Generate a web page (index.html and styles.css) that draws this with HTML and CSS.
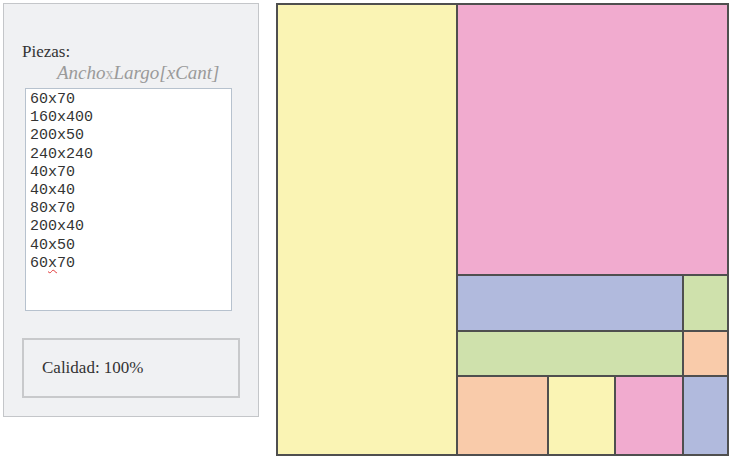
FILE: index.html
```html
<!DOCTYPE html>
<html lang="es">
<head>
<meta charset="utf-8">
<title>Piezas</title>
<link rel="stylesheet" href="styles.css">
</head>
<body>
<div class="page">
  <aside class="panel">
    <div class="label">Piezas:</div>
    <div class="hint">Ancho<span class="hx">x</span>Largo[xCant]</div>
    <div class="pieces">
      <div>60x70</div>
      <div>160x400</div>
      <div>200x50</div>
      <div>240x240</div>
      <div>40x70</div>
      <div>40x40</div>
      <div>80x70</div>
      <div>200x40</div>
      <div>40x50</div>
      <div>60<span class="spell">x</span>70</div>
    </div>
    <div class="quality">Calidad: 100%</div>
  </aside>
  <main class="bin">
    <div class="cell yellow big-y"></div>
    <div class="cell pink big-p"></div>
    <div class="cell blue wide-b"></div>
    <div class="cell green c5r2"></div>
    <div class="cell green wide-g"></div>
    <div class="cell orange c5r3"></div>
    <div class="cell orange c2r4"></div>
    <div class="cell yellow c3r4"></div>
    <div class="cell pink c4r4"></div>
    <div class="cell blue c5r4"></div>
  </main>
</div>
</body>
</html>
```
FILE: styles.css
```css
html, body {
  margin: 0;
  padding: 0;
  background: #ffffff;
}

.page {
  display: flex;
  align-items: flex-start;
  gap: 17px;
  padding: 3px 0 0 3px;
}

.panel {
  box-sizing: border-box;
  width: 256px;
  height: 414px;
  background: #f0f1f3;
  border: 1px solid #c4c6c9;
  padding: 38px 18px 0 18px;
  font-family: "Liberation Serif", "Times New Roman", serif;
  color: #333;
}

.label {
  font-size: 17px;
  line-height: 20px;
  height: 20px;
}

.hint {
  font-size: 19px;
  line-height: 20px;
  height: 20px;
  font-style: italic;
  color: #9a9a9a;
  padding-left: 35px;
  margin-top: 1px;
  white-space: nowrap;
}

.hint .hx {
  font-style: normal;
  font-size: 16px;
  color: #b0b0b0;
}

.pieces {
  box-sizing: border-box;
  margin: 5px 8px 0 3px;
  height: 223px;
  background: #ffffff;
  border: 1px solid #b7c2ce;
  padding: 2px 4px;
  font-family: "Liberation Mono", "Courier New", monospace;
  font-size: 15px;
  line-height: 18.2px;
  color: #333333;
}

.spell {
  text-decoration: underline wavy #e23a3a;
  text-decoration-thickness: 1px;
  text-underline-offset: 2px;
}

.quality {
  box-sizing: border-box;
  margin-top: 27px;
  height: 60px;
  border: 2px solid #c8c9cb;
  background: #f0f1f3;
  padding: 0 0 0 18px;
  display: flex;
  align-items: center;
  font-size: 17px;
  color: #333;
}

.bin {
  box-sizing: border-box;
  width: 453px;
  height: 453px;
  display: grid;
  grid-template-columns: 160fr 80fr 60fr 60fr 40fr;
  grid-template-rows: 240fr 50fr 40fr 70fr;
  border: 1px solid #4f4f4f;
}

.cell {
  border: 1px solid #4f4f4f;
}

.yellow { background: #faf4b4; }
.pink { background: #f1abcf; }
.blue { background: #b1badd; }
.green { background: #cfe1ac; }
.orange { background: #f9cbaa; }

.big-y { grid-column: 1; grid-row: 1 / 5; }
.big-p { grid-column: 2 / 6; grid-row: 1; }
.wide-b { grid-column: 2 / 5; grid-row: 2; }
.c5r2 { grid-column: 5; grid-row: 2; }
.wide-g { grid-column: 2 / 5; grid-row: 3; }
.c5r3 { grid-column: 5; grid-row: 3; }
.c2r4 { grid-column: 2; grid-row: 4; }
.c3r4 { grid-column: 3; grid-row: 4; }
.c4r4 { grid-column: 4; grid-row: 4; }
.c5r4 { grid-column: 5; grid-row: 4; }
```
